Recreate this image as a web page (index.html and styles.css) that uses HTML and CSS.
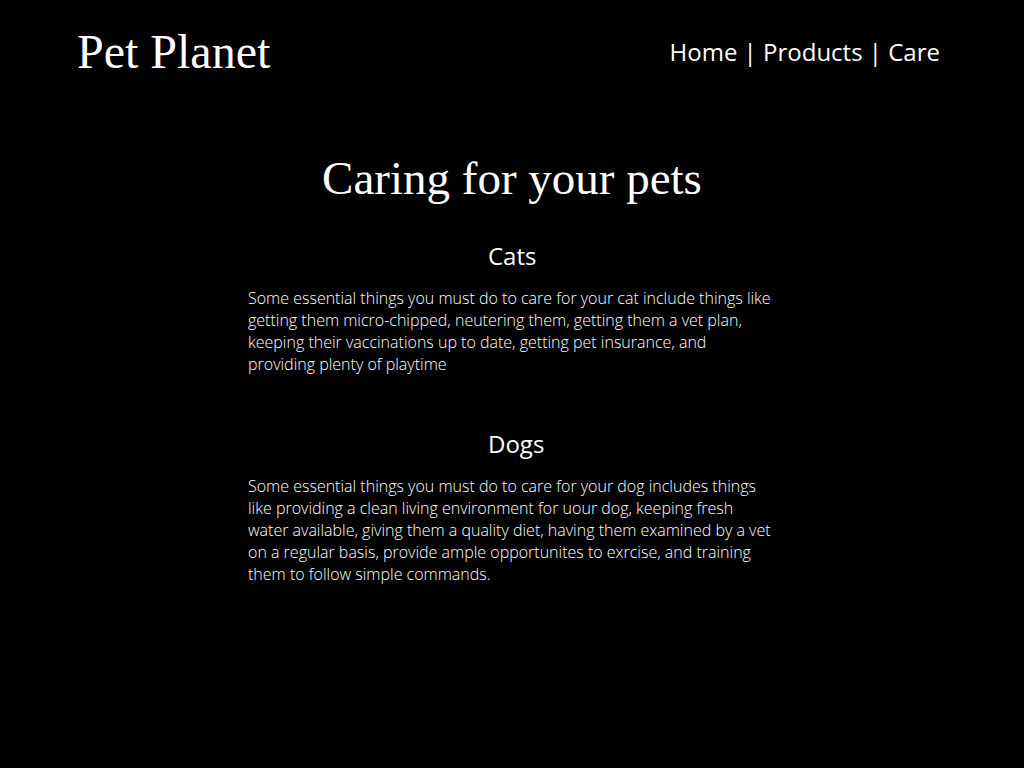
FILE: index.html
```html
<!DOCTYPE html>
<html lang="en">
<head>
<meta charset="utf-8">
<title>Pet Planet - Care</title>
<link rel="stylesheet" href="styles.css">
</head>
<body>
<header class="site-header">
  <div class="logo">Pet Planet</div>
  <nav class="nav">Home | Products | Care</nav>
</header>
<main class="content">
  <h1 class="page-title">Caring for your pets</h1>
  <section class="care cats">
    <h2 class="care-title">Cats</h2>
    <p class="care-text">Some essential things you must do to care for your cat include things like getting them micro-chipped, neutering them, getting them a vet plan, keeping their vaccinations up to date, getting pet insurance, and providing plenty of playtime</p>
  </section>
  <section class="care dogs">
    <h2 class="care-title">Dogs</h2>
    <p class="care-text">Some essential things you must do to care for your dog includes things like providing a clean living environment for uour dog, keeping fresh water available, giving them a quality diet, having them examined by a vet on a regular basis, provide ample opportunites to exrcise, and training them to follow simple commands.</p>
  </section>
</main>
</body>
</html>
```
FILE: styles.css
```css
html, body {
  margin: 0;
  padding: 0;
  background: #000;
  color: #fff;
}
body {
  font-family: "Open Sans", "Liberation Sans", sans-serif;
  min-height: 768px;
}
.site-header {
  display: flex;
  justify-content: space-between;
  align-items: center;
  padding: 24px 84px 0 77px;
}
.logo {
  font-family: "Liberation Serif", "DejaVu Serif", serif;
  font-size: 48px;
  line-height: 56px;
}
.nav {
  font-size: 24px;
  line-height: 32px;
}
.content {
  width: 528px;
  margin: 0 auto;
}
.page-title {
  font-family: "Liberation Serif", "DejaVu Serif", serif;
  font-weight: normal;
  font-size: 47px;
  line-height: 56px;
  text-align: center;
  margin: 70px -100px 34px;
}
.care + .care {
  margin-top: 53px;
}
.care-title {
  font-weight: normal;
  font-size: 24px;
  line-height: 32px;
  margin: 0 0 15px;
  padding-left: 240px;
}
.care-text {
  font-weight: 300;
  font-size: 16px;
  line-height: 22px;
  margin: 0;
}
```
